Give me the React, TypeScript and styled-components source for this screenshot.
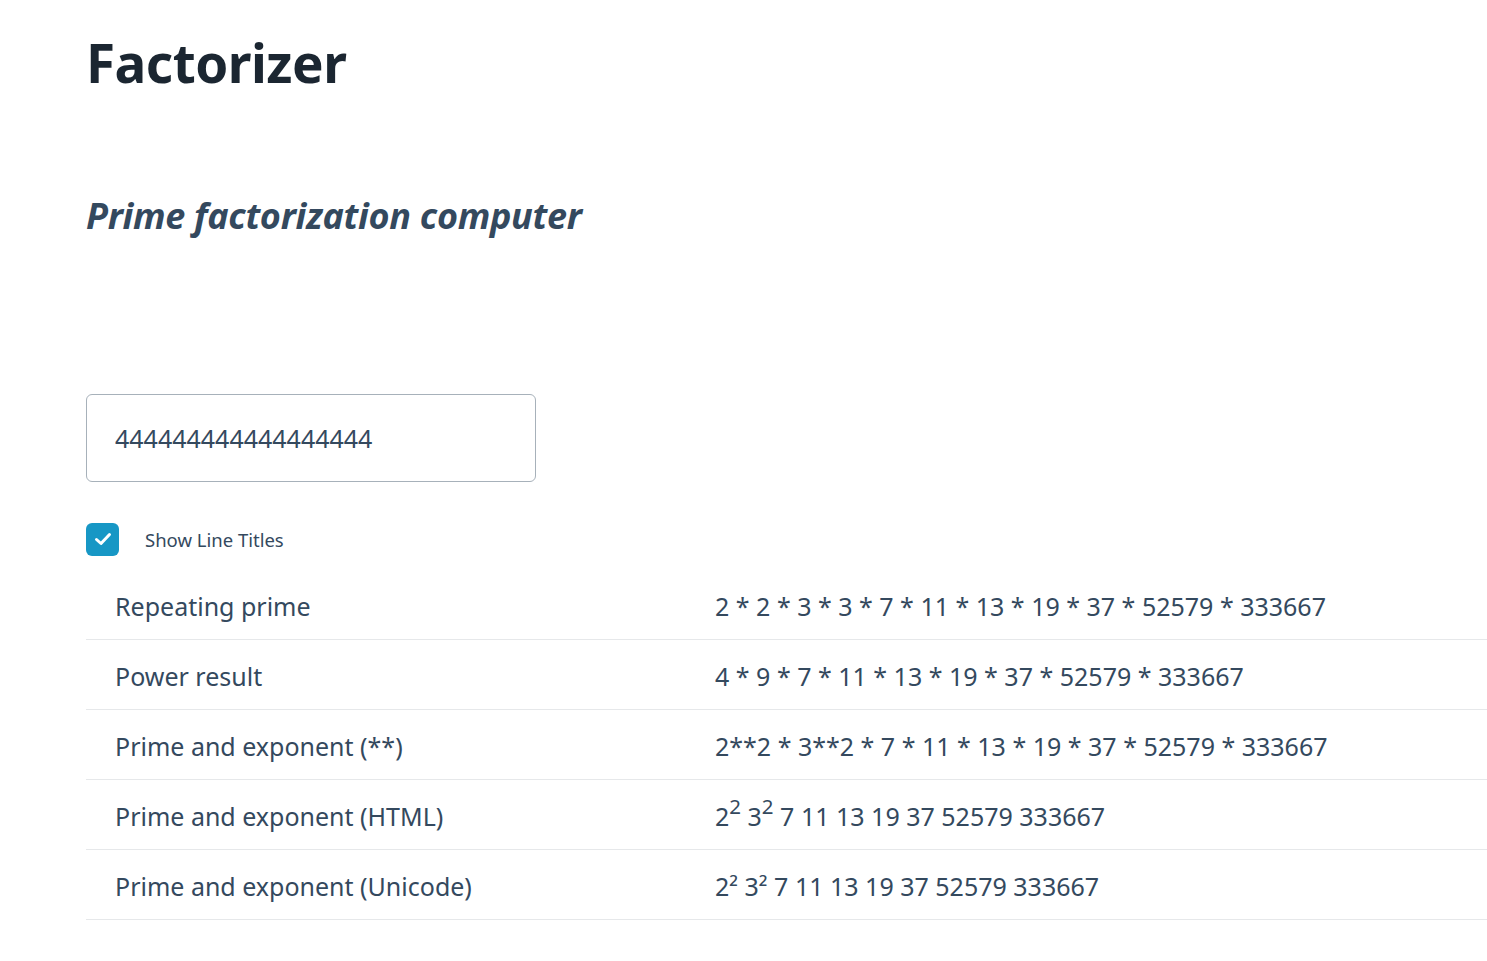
import React from "react";
import styled, { createGlobalStyle } from "styled-components";

const Global = createGlobalStyle`
  html, body { margin: 0; padding: 0; background: #fff; }
  body { font-family: "Noto Sans", "Open Sans", sans-serif; overflow: hidden; }
`;

const Page = styled.div`
  padding: 27px 0 0 86px;
  width: 1401px;
  box-sizing: border-box;
`;

const Title = styled.h1`
  margin: 0;
  font-size: 53px;
  font-weight: 700;
  color: #1b2631;
  letter-spacing: -0.5px;
  line-height: 72px;
`;

const Subtitle = styled.h2`
  margin: 93px 0 0;
  font-size: 36px;
  font-weight: 700;
  font-style: italic;
  color: #34495e;
  line-height: 48px;
  letter-spacing: -0.3px;
`;

const NumberInput = styled.input`
  display: block;
  margin-top: 154px;
  width: 450px;
  height: 88px;
  box-sizing: border-box;
  border: 1px solid #a7b1ba;
  border-radius: 6px;
  padding: 0 28px;
  font-family: "Noto Sans", sans-serif;
  font-size: 25px;
  color: #34495e;
  outline: none;
`;

const CheckRow = styled.label`
  display: flex;
  align-items: center;
  gap: 26px;
  margin-top: 40px;
  height: 34px;
  font-size: 18.5px;
  color: #34495e;
`;

const Box = styled.span<{ $on: boolean }>`
  width: 33px;
  height: 33px;
  border-radius: 6px;
  background: ${(p) => (p.$on ? "#1797c5" : "#fff")};
  display: flex;
  align-items: center;
  justify-content: center;
`;

const Table = styled.div`
  margin-top: 14px;
  width: 1401px;
`;

const Row = styled.div`
  display: grid;
  grid-template-columns: 629px 1fr;
  height: 70px;
  align-items: center;
  border-bottom: 1px solid #e6e8ea;
  box-sizing: border-box;
  font-size: 25px;
  color: #34495e;
`;

const Cell = styled.div<{ $value?: boolean }>`
  padding-left: ${(p) => (p.$value ? "0" : "29px")};
  padding-top: 3px;
  white-space: nowrap;
  line-height: 32px;
`;

const Sup = styled.sup`
  font-size: 0.82em;
  line-height: 0;
  vertical-align: 0.6em;
`;

const rows: { label: string; value: React.ReactNode }[] = [
  { label: "Repeating prime", value: "2 * 2 * 3 * 3 * 7 * 11 * 13 * 19 * 37 * 52579 * 333667" },
  { label: "Power result", value: "4 * 9 * 7 * 11 * 13 * 19 * 37 * 52579 * 333667" },
  { label: "Prime and exponent (**)", value: "2**2 * 3**2 * 7 * 11 * 13 * 19 * 37 * 52579 * 333667" },
  {
    label: "Prime and exponent (HTML)",
    value: (
      <>
        2<Sup>2</Sup> 3<Sup>2</Sup> 7 11 13 19 37 52579 333667
      </>
    ),
  },
  { label: "Prime and exponent (Unicode)", value: "2² 3² 7 11 13 19 37 52579 333667" },
];

export default function App() {
  return (
    <>
      <Global />
      <Page>
        <Title>Factorizer</Title>
        <Subtitle>Prime factorization computer</Subtitle>
        <NumberInput defaultValue="444444444444444444" />
        <CheckRow>
          <Box $on>
            <svg width="18" height="14" viewBox="0 0 18 14">
              <path d="M2.5 7.5 L7 11.5 L15.5 2.5" fill="none" stroke="#fff" strokeWidth="3" strokeLinecap="round" strokeLinejoin="round" />
            </svg>
          </Box>
          Show Line Titles
        </CheckRow>
        <Table>
          {rows.map((r) => (
            <Row key={r.label}>
              <Cell>{r.label}</Cell>
              <Cell $value>{r.value}</Cell>
            </Row>
          ))}
        </Table>
      </Page>
    </>
  );
}
